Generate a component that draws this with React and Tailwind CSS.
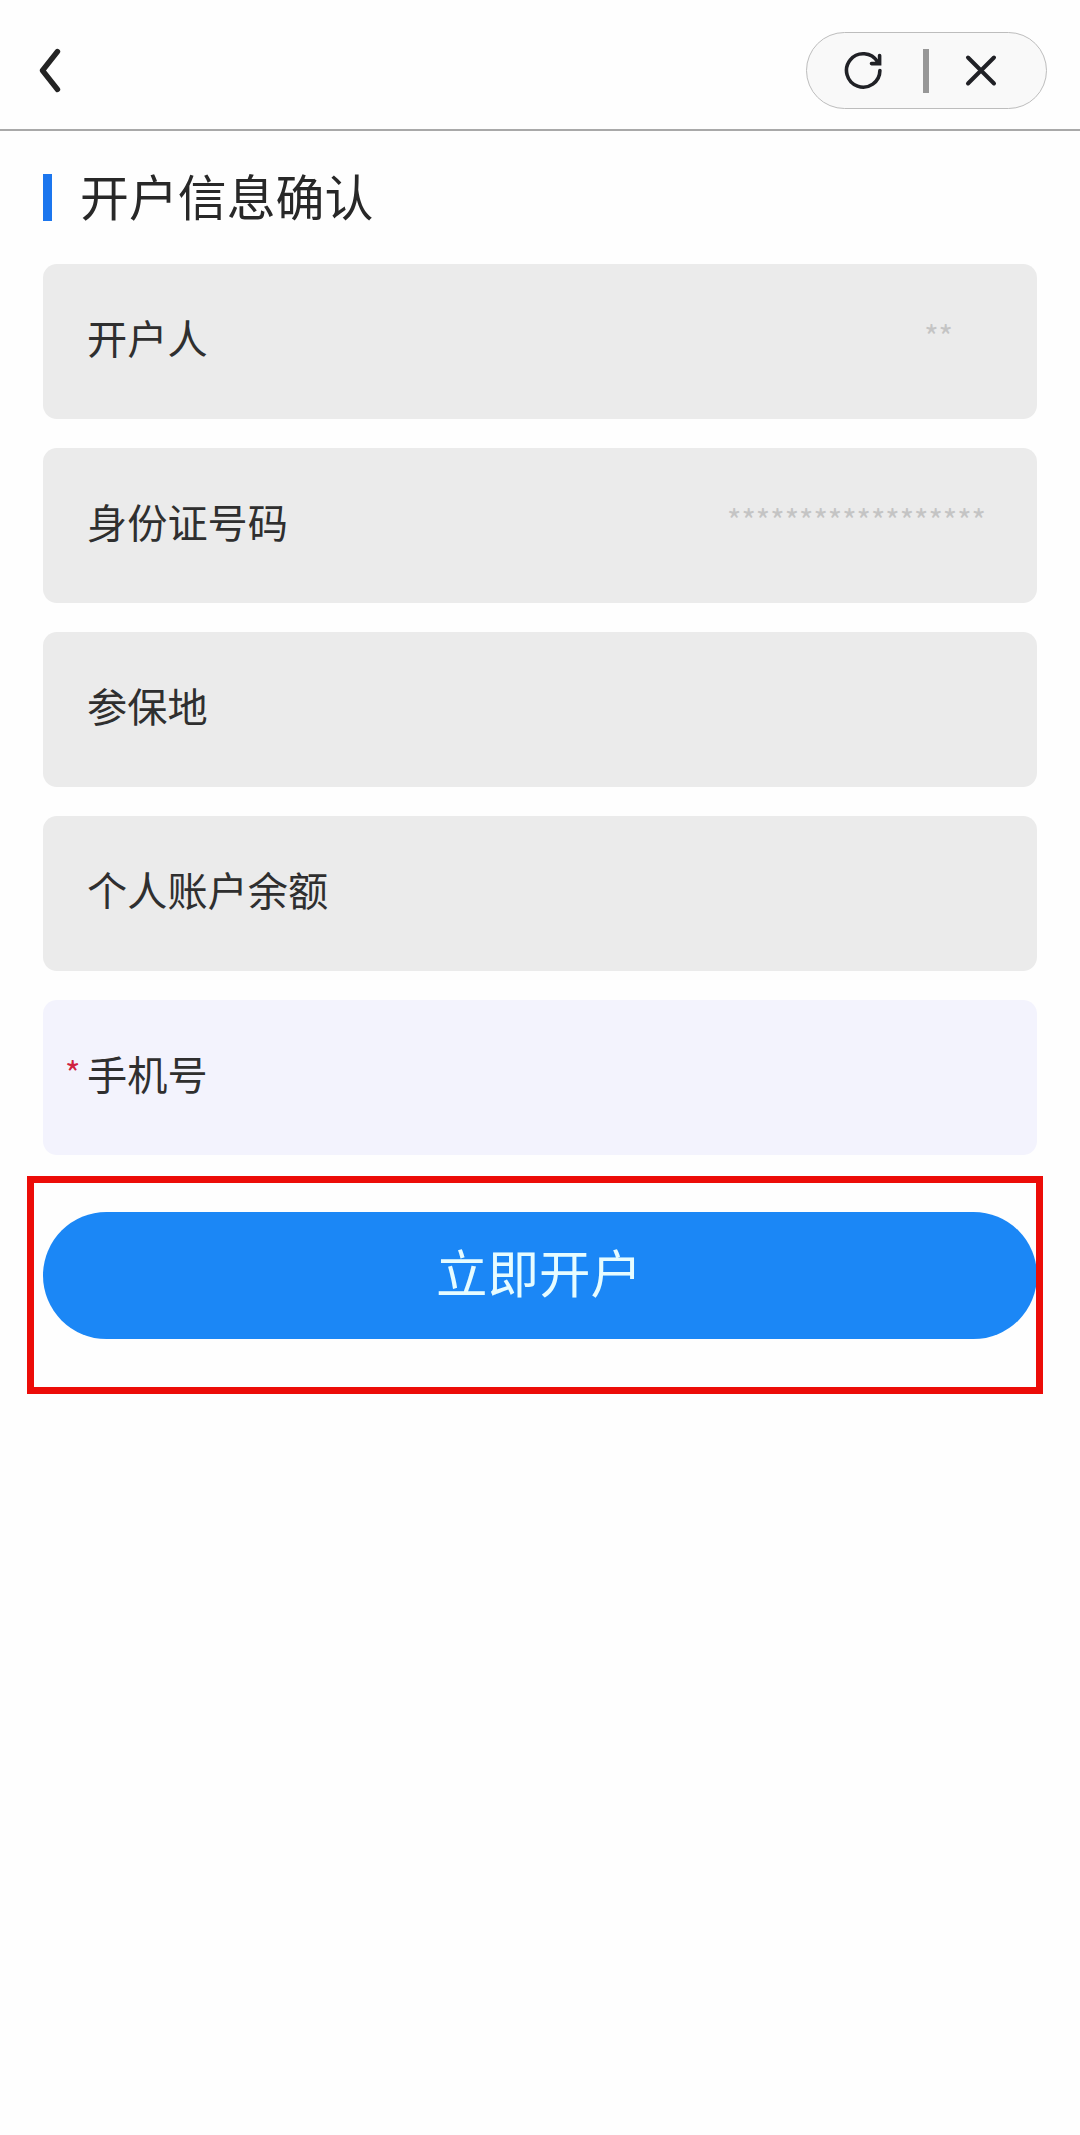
const fields = [
  { label: "开户人", value: "**", pad: "pr-[84px]" },
  { label: "身份证号码", value: "******************", pad: "pr-[51px]" },
  { label: "参保地" },
  { label: "个人账户余额" },
  { label: "手机号", required: true },
];

function Field({ label, value, pad = "", required }) {
  return (
    <div
      className={`relative flex h-[155px] items-center justify-between rounded-[14px] pl-[44px] ${pad} ${
        required ? "bg-[#f3f3fd]" : "bg-[#ebebeb]"
      }`}
    >
      {required && (
        <span className="absolute left-[22px] top-[50px] text-[33px] leading-[44px] text-[#d0213f]">*</span>
      )}
      <span className="-mt-[9px] text-[40.2px] leading-[60px] text-[#2f2f2f]">{label}</span>
      {value && <span className="-mt-[11px] text-[30.8px] leading-[44px] text-[#c4c4c4]">{value}</span>}
    </div>
  );
}

export default function App() {
  return (
    <div className="min-h-[2135px] w-[1080px] bg-[#fefefe] font-['Noto_Sans_CJK_SC',sans-serif]">
      <header className="flex h-[131px] items-start justify-between border-b-2 border-[#a9a9a9] pl-[38px] pr-[33px] pt-8">
        <button className="mt-[15px]" aria-label="返回">
          <svg width="24" height="46" viewBox="0 0 24 46" fill="none" stroke="#242424" strokeWidth="5.4" strokeLinecap="round" strokeLinejoin="round">
            <path d="M19.5 4.5L4.5 23.5L19.5 42.5" />
          </svg>
        </button>
        <div className="flex h-[77px] w-[241px] items-center rounded-[40px] border border-[#bdbdbd] bg-[#f9f9f9] pl-[36px]">
          <button aria-label="刷新">
            <svg width="42" height="42" viewBox="0 0 42 42" fill="none" stroke="#202126" strokeWidth="3.6">
              <path d="M36.9 20.5A16.7 16.7 0 1 1 34.5 11.8" strokeLinecap="round" />
              <path d="M28.5 13.6H36.6V5.5" strokeLinecap="round" />
            </svg>
          </button>
          <span className="ml-[38px] h-[44px] w-[6px] bg-[#979797]" />
          <button className="ml-[35px]" aria-label="关闭">
            <svg width="34" height="34" viewBox="0 0 34 34" fill="none" stroke="#202126" strokeWidth="4" strokeLinecap="round">
              <path d="M4 3.5L30 29.5M30 3.5L4 29.5" />
            </svg>
          </button>
        </div>
      </header>

      <main className="px-[43px]">
        <h1 className="flex h-[133px] items-center text-[48.9px] leading-[72px] text-[#282828]">
          <span className="-mt-[1px] mr-[28px] h-[47px] w-[9px] bg-[#1c76ee]" />
          <span className="-mt-[5px]">开户信息确认</span>
        </h1>

        <section className="flex flex-col gap-[29px]">
          {fields.map((f) => (
            <Field key={f.label} {...f} />
          ))}
        </section>

        <div className="relative -ml-[16px] mt-[21px] h-[218px] w-[1016px] pl-[16px] pt-[36px]">
          <button className="flex h-[127px] w-[994px] items-center justify-center rounded-full bg-[#1b87f6] text-[51.5px] leading-[76px] text-[#e6fcff]">
            <span className="-mt-[9px] -ml-[2px]">立即开户</span>
          </button>
          <div className="pointer-events-none absolute inset-0 border-[7px] border-[#ec0c08]" />
        </div>
      </main>
    </div>
  );
}
